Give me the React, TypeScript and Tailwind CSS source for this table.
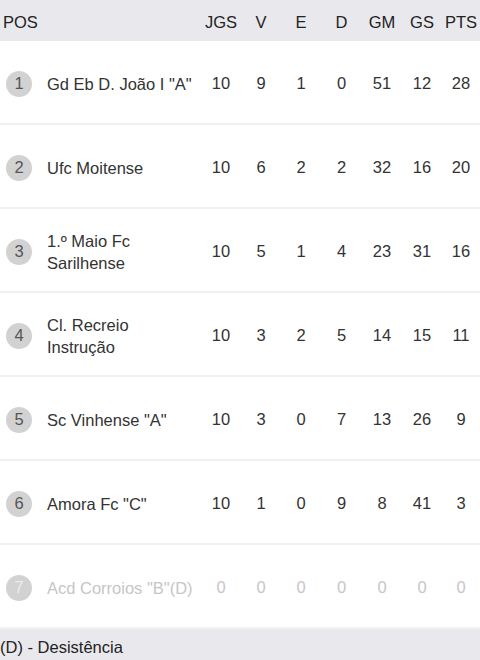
import React from "react";

type Row = {
  pos: number;
  name: string;
  stats: number[];
  out?: boolean;
};

const rows: Row[] = [
  { pos: 1, name: 'Gd Eb D. João I "A"', stats: [10, 9, 1, 0, 51, 12, 28] },
  { pos: 2, name: "Ufc Moitense", stats: [10, 6, 2, 2, 32, 16, 20] },
  { pos: 3, name: "1.º Maio Fc Sarilhense", stats: [10, 5, 1, 4, 23, 31, 16] },
  { pos: 4, name: "Cl. Recreio Instrução", stats: [10, 3, 2, 5, 14, 15, 11] },
  { pos: 5, name: 'Sc Vinhense "A"', stats: [10, 3, 0, 7, 13, 26, 9] },
  { pos: 6, name: 'Amora Fc "C"', stats: [10, 1, 0, 9, 8, 41, 3] },
  { pos: 7, name: 'Acd Corroios "B"(D)', stats: [0, 0, 0, 0, 0, 0, 0], out: true },
];

const cols = ["JGS", "V", "E", "D", "GM", "GS", "PTS"];
// column widths (px), written out so tailwind picks them up
const widths = ["w-[40px]", "w-[40px]", "w-[40px]", "w-[41px]", "w-[40px]", "w-[40px]", "w-[38px]"];

export default function App() {
  return (
    <div className="w-[480px] h-[660px] bg-white overflow-hidden text-[16.5px] text-[#333] font-['Liberation_Sans',Arial,sans-serif]">
      {/* header */}
      <div className="flex items-center h-[41px] pt-[4px] bg-[#e9e9ed] text-[#222]">
        <div className="w-[201px] pl-[3px]">POS</div>
        {cols.map((c, i) => (
          <div key={c} className={`${widths[i]} text-center`}>
            {c}
          </div>
        ))}
      </div>

      {rows.map((r) => (
        <div
          key={r.pos}
          className={`flex items-center h-[84px] pt-[3px] border-b-2 border-[#f1f1f1] ${r.out ? "text-[#c6c6c6]" : ""}`}
        >
          <div className="w-[40px] pl-[6px]">
            <div
              className={`w-[26px] h-[26px] rounded-full bg-[#d2d2d2] flex items-center justify-center ${r.out ? "text-[#ececec]" : "text-[#555]"}`}
            >
              {r.pos}
            </div>
          </div>
          <div className="w-[161px] pl-[7px] leading-[22px] pr-2">{r.name}</div>
          {r.stats.map((s, i) => (
            <div key={i} className={`${widths[i]} text-center`}>
              {s}
            </div>
          ))}
        </div>
      ))}

      <div className="h-[32px] pt-[5px] flex items-center bg-[#e9e9ed] text-[#222]">(D) - Desistência</div>
    </div>
  );
}
